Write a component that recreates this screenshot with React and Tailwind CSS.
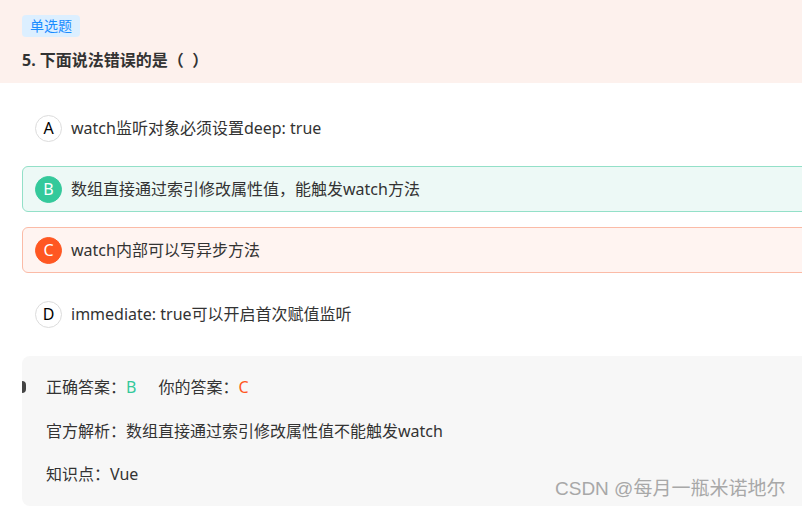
const font = { fontFamily: '"Noto Sans", "Noto Sans CJK SC", sans-serif' };

const options = [
  { key: 'A', text: 'watch监听对象必须设置deep: true', state: 'none' },
  { key: 'B', text: '数组直接通过索引修改属性值，能触发watch方法', state: 'right' },
  { key: 'C', text: 'watch内部可以写异步方法', state: 'wrong' },
  { key: 'D', text: 'immediate: true可以开启首次赋值监听', state: 'none' },
];

const Option = ({ opt }) => {
  const box =
    opt.state === 'right'
      ? 'border-[#93e0c8] bg-[#edf9f6]'
      : opt.state === 'wrong'
      ? 'border-[#fbbba7] bg-[#fff4f1]'
      : 'border-transparent bg-white';
  const circle =
    opt.state === 'right'
      ? 'bg-[#34c99b] text-white border-[#34c99b]'
      : opt.state === 'wrong'
      ? 'bg-[#ff5722] text-white border-[#ff5722]'
      : 'bg-white text-black border-[#dcdcdc]';
  return (
    <div className={`flex items-center h-[46px] pl-[12px] border rounded-l-[6px] ${box} ${opt.key === 'D' ? 'mt-[3px]' : ''}`}>
      <div className={`w-[27px] h-[27px] rounded-full border flex items-center justify-center text-[16px] ${circle}`}>
        {opt.key}
      </div>
      <span className="ml-[9px] text-[16px] text-[#333]">{opt.text}</span>
    </div>
  );
};

export default function App() {
  return (
    <div className="relative w-[802px] h-[506px] overflow-hidden bg-white" style={font}>
      <div className="bg-[#fdf1ed] h-[83px] pl-[22px] pt-[13px]">
        <span className="inline-flex items-center h-[22px] px-[8px] rounded-[4px] bg-[#dcefff] text-[#1a8cff] text-[14px]">
          单选题
        </span>
        <div className="mt-[12px] text-[16px] font-bold text-[#333] leading-[22px]">5. 下面说法错误的是（&nbsp;&nbsp;）</div>
      </div>

      <div className="w-[840px] pl-[22px] pt-[22px] flex flex-col gap-[15px]">
        {options.map((o) => (
          <Option key={o.key} opt={o} />
        ))}
      </div>

      <div className="relative ml-[22px] mt-[19px] w-[820px] h-[150px] bg-[#f7f7f7] rounded-[8px] pl-[24px] pt-[20px] text-[16px] text-[#333]">
        <div className="absolute left-0 top-[25px] w-[4px] h-[12px] rounded-r-full bg-[#444]" />
        <div className="h-[22px] flex items-center">
          正确答案：<span className="text-[#34c99b]">B</span>
          <span className="ml-[22px]">你的答案：</span>
          <span className="text-[#ff5722]">C</span>
        </div>
        <div className="mt-[22px] h-[22px] flex items-center">官方解析：数组直接通过索引修改属性值不能触发watch</div>
        <div className="mt-[21px] h-[22px] flex items-center">知识点：Vue</div>
      </div>

      <div className="absolute left-[555px] top-[477px] text-[19px] text-[#a8a8a8] leading-[24px]" style={{ fontFamily: '"Liberation Sans", "Noto Sans CJK SC", sans-serif' }}>
        CSDN @每月一瓶米诺地尔
      </div>
    </div>
  );
}
